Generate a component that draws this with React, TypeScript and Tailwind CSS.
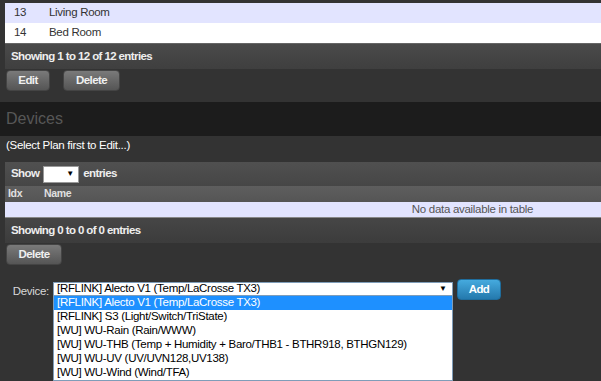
import React from "react";

const items = [
  "[RFLINK] Alecto V1 (Temp/LaCrosse TX3)",
  "[RFLINK] S3 (Light/Switch/TriState)",
  "[WU] WU-Rain (Rain/WWW)",
  "[WU] WU-THB (Temp + Humidity + Baro/THB1 - BTHR918, BTHGN129)",
  "[WU] WU-UV (UV/UVN128,UV138)",
  "[WU] WU-Wind (Wind/TFA)",
];

const boldTxt = "font-bold text-[11.5px] tracking-[-0.6px]";
const regTxt = "text-[11.5px] tracking-[-0.3px]";

function GreyButton({ label, w }: { label: string; w: string }) {
  return (
    <div
      className={`${w} h-[21px] rounded-[4px] bg-gradient-to-b from-[#7a7a7a] to-[#555555] border border-[#444] flex items-center justify-center ${boldTxt} text-[#f0f0f0]`}
    >
      {label}
    </div>
  );
}

export default function App() {
  return (
    <div className="w-[601px] h-[381px] overflow-hidden bg-[#333333] font-['Liberation_Sans',Arial,sans-serif] relative">
      {/* top table */}
      <div className="pt-[3px] pl-[5px]">
        <div className="w-[1000px]">
          <div className={`h-[20px] bg-[#e2e4ff] flex items-center ${regTxt} text-[#333]`}>
            <span className="w-[44px] pl-[9px]">13</span>
            <span>Living Room</span>
          </div>
          <div className={`h-[20px] bg-white flex items-center ${regTxt} text-[#333]`}>
            <span className="w-[44px] pl-[9px]">14</span>
            <span>Bed Room</span>
          </div>
          <div className={`h-[26px] border-t border-[#666] bg-gradient-to-b from-[#4a4a4a] to-[#3f3f3f] flex items-center pl-[6px] ${boldTxt} text-[#eeeeee]`}>
            Showing 1 to 12 of 12 entries
          </div>
        </div>
      </div>
      <div className="h-[33px] flex items-start pt-[1px] pl-[6px] gap-[13px]">
        <GreyButton label="Edit" w="w-[44px]" />
        <GreyButton label="Delete" w="w-[57px]" />
      </div>

      {/* Devices header */}
      <div className="h-[34px] bg-[#1c1c1c] flex items-center pl-[6px] text-[16px] text-[#575757]">
        Devices
      </div>
      <div className={`h-[26px] pl-[6px] pt-[1px] ${regTxt} text-white`}>
        (Select Plan first to Edit...)
      </div>

      {/* devices table */}
      <div className="pl-[5px]">
        <div className="w-[935px]">
          <div className={`h-[24px] bg-gradient-to-b from-[#505050] to-[#464646] flex items-center pl-[6px] ${boldTxt} text-[#eeeeee]`}>
            <span>Show</span>
            <div className="ml-[4px] w-[36px] h-[17px] bg-white border border-[#999] flex items-center justify-end pr-[4px]">
              <span className="text-[8px] text-black leading-none tracking-normal">▼</span>
            </div>
            <span className="ml-[4px]">entries</span>
          </div>
          <div className="h-[16px] bg-gradient-to-b from-[#5e5e5e] to-[#555555] flex items-center text-[10.5px] font-bold tracking-[-0.3px] text-[#e0e0e0]">
            <span className="w-[39px] pl-[3px]">Idx</span>
            <span>Name</span>
          </div>
          <div className={`h-[16px] bg-[#e2e4ff] border-b border-[#888] flex items-center justify-center ${regTxt} text-[#555]`}>
            No data available in table
          </div>
          <div className={`h-[25px] bg-gradient-to-b from-[#464646] to-[#3c3c3c] flex items-center pl-[6px] ${boldTxt} text-[#eeeeee]`}>
            Showing 0 to 0 of 0 entries
          </div>
        </div>
      </div>
      <div className="pl-[6px] pt-[1px]">
        <GreyButton label="Delete" w="w-[56px]" />
      </div>

      {/* device row */}
      <div className="mt-[17px] flex items-start">
        <div className={`w-[53px] pt-[1px] pr-[4px] text-right ${regTxt} text-[#d8d8d8]`}>Device:</div>
        <div className="relative">
          <div className={`w-[400px] h-[14px] bg-white border border-[#7f9db9] flex items-center pl-[3px] ${regTxt} text-black`}>
            <span className="flex-1">[RFLINK] Alecto V1 (Temp/LaCrosse TX3)</span>
            <span className="text-[8px] pr-[5px] leading-none tracking-normal">▼</span>
          </div>
          <div className="absolute left-0 top-[14px] w-[400px] bg-white border border-[#7f9db9] border-t-0 z-10">
            {items.map((t, i) => (
              <div
                key={t}
                className={`h-[14px] flex items-center pl-[3px] ${regTxt} whitespace-nowrap ${
                  i === 0 ? "bg-[#1e90ff] text-white" : "text-black"
                }`}
              >
                {t}
              </div>
            ))}
          </div>
        </div>
        <div className={`ml-[4px] -mt-[3px] w-[44px] h-[21px] rounded-[4px] bg-gradient-to-b from-[#45aade] to-[#2479ad] border border-[#1f6d9d] flex items-center justify-center ${boldTxt} text-white`}>
          Add
        </div>
      </div>
    </div>
  );
}
